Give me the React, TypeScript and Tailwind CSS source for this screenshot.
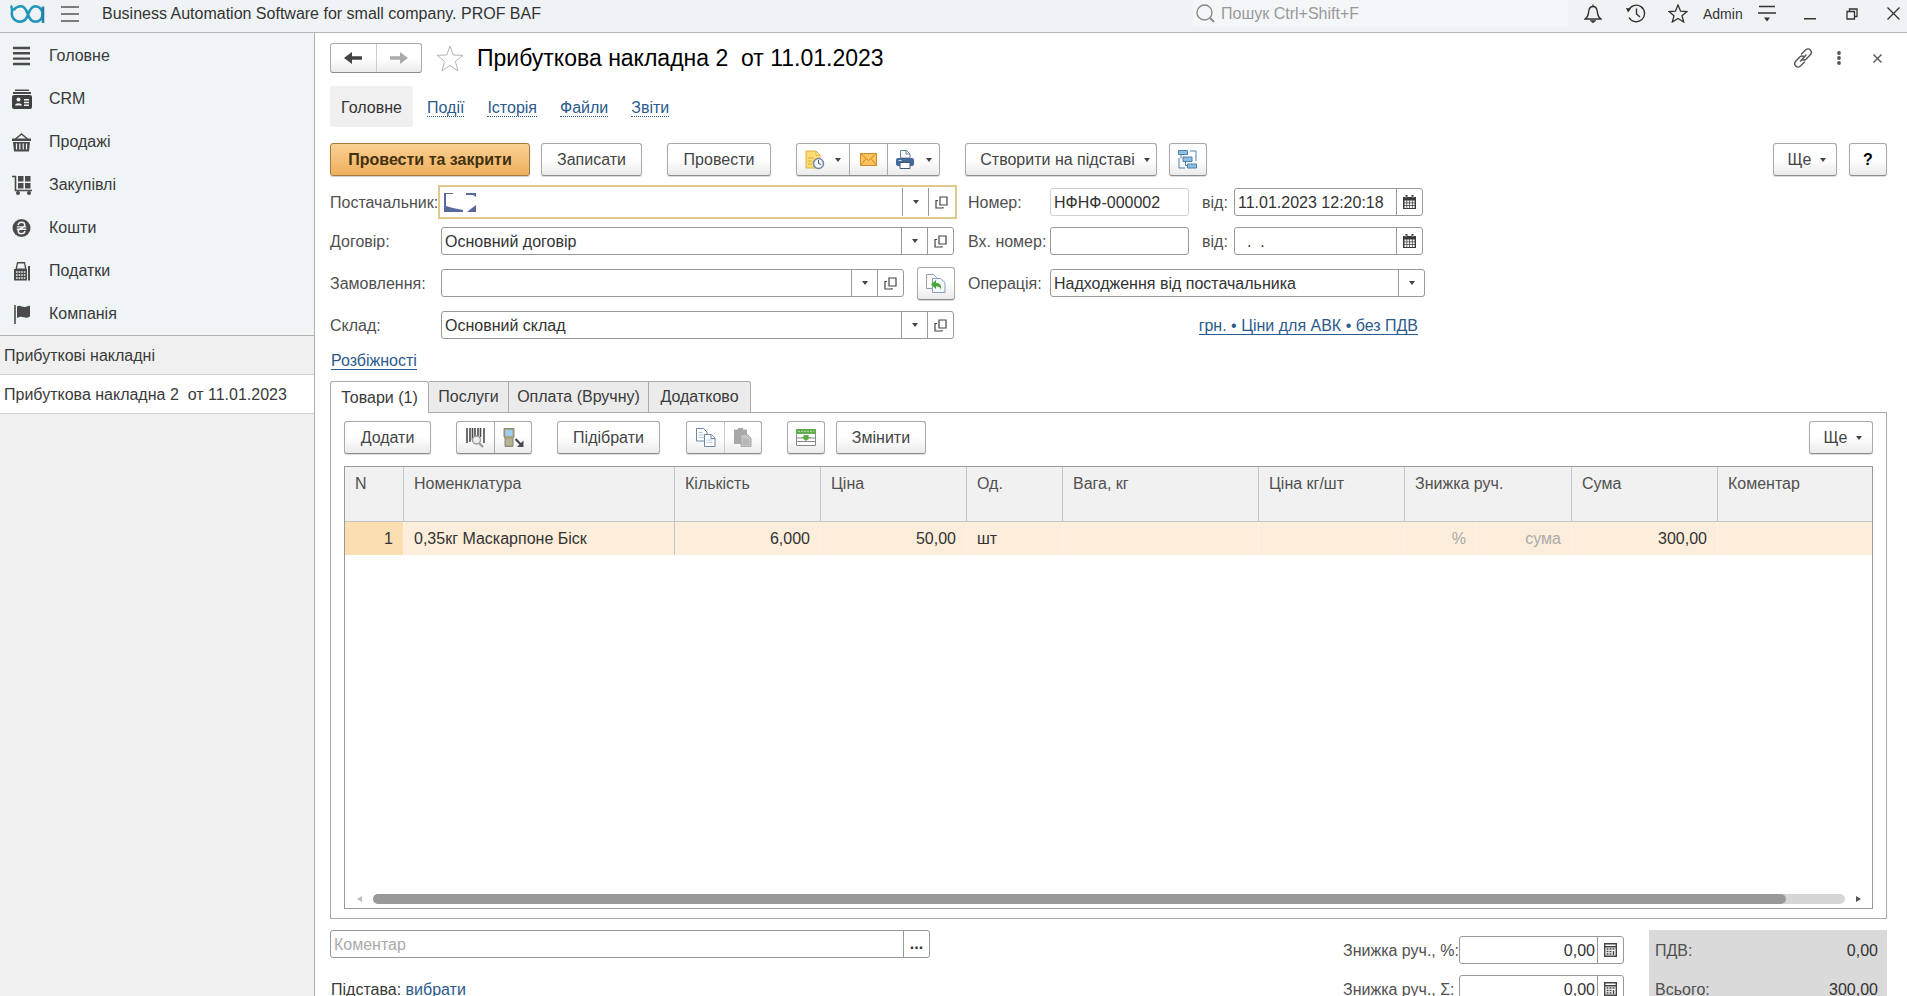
import type { ReactNode } from 'react';

const BTN =
  'flex items-center justify-center h-[33px] rounded-[3px] border border-[#a9a9a9] border-b-[#8c8c8c] bg-linear-to-b from-white from-50% to-[#ebebeb] text-[#444] shadow-[0_1px_1px_rgba(0,0,0,0.15)] shrink-0';
const FIELD = 'flex h-7 rounded-[3px] border border-[#999] bg-white overflow-hidden shrink-0';
const INPUT = 'flex-1 min-w-0 h-full pl-[3px] pt-px bg-transparent outline-none text-[#333]';
const SIDE = 'flex items-center justify-center h-full border-l border-[#999] shrink-0';
const LINK = 'text-[#2b5a8c] border-b border-[#2b5a8c] leading-[17px]';

/* ---------- small glyphs ---------- */

function Caret() {
  return (
    <svg width="6" height="4" viewBox="0 0 6 4" fill="#444">
      <path d="M0 0h6L3 4z" />
    </svg>
  );
}

function OpenIcon() {
  return (
    <svg width="13" height="13" viewBox="0 0 13 13" fill="none" stroke="#444" strokeWidth="1.2">
      <path d="M5 1h7v8H5zM3 4.5H1v7.500h7V11" />
    </svg>
  );
}

function CalendarIcon() {
  return (
    <svg width="13" height="14" viewBox="0 0 13 14">
      <path d="M0 2h13v12H0z" fill="#3a3a3a" />
      <path d="M2.500 0h2v3h-2zM8.500 0h2v3h-2z" fill="#3a3a3a" />
      <path d="M3 1v2M10 1v2" stroke="#fff" strokeWidth=".6" />
      <path
        d="M1.500 5.500h2v2h-2zM4.200 5.500h2v2h-2zM6.900 5.500h2v2h-2zM9.600 5.500h2v2h-2zM1.500 8.200h2v2h-2zM4.200 8.200h2v2h-2zM6.900 8.200h2v2h-2zM9.600 8.200h2v2h-2zM1.500 10.900h2v2h-2zM4.200 10.900h2v2h-2zM6.900 10.900h2v2h-2zM9.600 10.900h2v2h-2z"
        fill="#fff"
      />
    </svg>
  );
}

function CalculatorIcon() {
  return (
    <svg width="13" height="14" viewBox="0 0 13 14" fill="none" stroke="#444">
      <path d="M.7.700h11.600v12.600H.700zM.700 3.800h11.600" strokeWidth="1.400" />
      <path d="M2.500 6h2M5.500 6h2M8.500 6h2M2.500 8.500h2M5.500 8.500h2M2.500 11h2M5.500 11h2M9.500 8v4" strokeWidth="1.500" />
    </svg>
  );
}

function Logo() {
  return (
    <svg width="35" height="20" viewBox="0 0 35 20" fill="none" strokeWidth="2.600">
      <path
        d="M.500 2C2.300 2.300 2 4.500 2 8a8 8 0 0 0 8 9.700c5.500 0 7-4.200 8.500-8.200S22 2.300 25.500 2.300a7.200 7.500 0 0 1 7 7.700c0 4.500-3 7.700-7 7.700-4.300 0-6.300-3.200-7.800-7.700s-3-7.700-6.700-7.700c-3.500 0-5.700 1.500-7.500 4"
        stroke="#2096bb"
      />
      <path d="M33 2.500v16.500" stroke="#2b7fa6" />
    </svg>
  );
}

/* ---------- navigation ---------- */

const sections: { label: string; icon: ReactNode }[] = [
  {
    label: 'Головне',
    icon: <path d="M1 2h17M1 7.300h17M1 12.600h17M1 18h17" stroke="#4a4a4a" strokeWidth="2.400" />,
  },
  {
    label: 'CRM',
    icon: (
      <>
        <path d="M3 .500h14v1.500H3zM1 3h18v2H1z" fill="#4a4a4a" />
        <rect x="0" y="6" width="20" height="14" rx="2" fill="#3f3f3f" />
        <circle cx="6.500" cy="10.500" r="2" fill="#eef3f6" />
        <path d="M3 16.500c0-3 7-3 7 0zM12 10h5v1.500h-5zM12 12.800h5v1.500h-5zM12 15.500h5V17h-5z" fill="#eef3f6" />
      </>
    ),
  },
  {
    label: 'Продажі',
    icon: (
      <>
        <path d="M3.500 7L9.500 2l6 5" fill="none" stroke="#4a4a4a" strokeWidth="1.500" />
        <path d="M0 6.500h19v2.500H0zM1 10h17l-1 9.500H2z" fill="#4a4a4a" />
        <path d="M4.500 11.500v6M7.800 11.500v6M11.200 11.500v6M14.500 11.500v6" stroke="#eef3f6" strokeWidth="1.200" />
      </>
    ),
  },
  {
    label: 'Закупівлі',
    icon: (
      <>
        <path d="M0 1.500h3.500v14H20" fill="none" stroke="#4a4a4a" strokeWidth="1.600" />
        <path d="M6 1h5.500v5.500H6zM13 1h5.500v5.500H13zM6 8h5.500v5.500H6zM13 8h5.500v5.500H13z" fill="#4a4a4a" />
        <circle cx="6" cy="18" r="2" fill="#4a4a4a" />
        <circle cx="17" cy="18" r="2" fill="#4a4a4a" />
      </>
    ),
  },
  {
    label: 'Кошти',
    icon: (
      <>
        <circle cx="9.500" cy="10" r="9" fill="#4a4a4a" />
        <path
          d="M6 7.200C6.500 5 8 4.300 9.500 4.300c2 0 3.300 1.200 3.300 2.700 0 3.500-6.600 3-6.600 6.300 0 1.500 1.500 2.500 3.300 2.500 1.700 0 3-.8 3.500-2.800M4.800 8.900h9.500M4.800 11.300h9.500"
          fill="none"
          stroke="#eef3f6"
          strokeWidth="1.400"
        />
      </>
    ),
  },
  {
    label: 'Податки',
    icon: (
      <>
        <path d="M5 1h8l1.500 7h-11zM2 8h13v11.500H2zM16 5h2v14.500h-2z" fill="#4a4a4a" />
        <path d="M6 2.500h6l1 5H5z" fill="#eef3f6" />
        <path d="M4 11h9.500M4 14h9.500M4 17h9.500" stroke="#eef3f6" strokeWidth="1.300" strokeDasharray="1.600 1" />
      </>
    ),
  },
  {
    label: 'Компанія',
    icon: (
      <>
        <path d="M3 1v19" stroke="#4a4a4a" strokeWidth="1.600" />
        <path d="M5 2.500c3-2 5 1 8 .5 2-.3 2.500-1 5-1.500v11c-3 1.500-4 1.500-6 .8-3-1-4-.8-7 .7z" fill="#4a4a4a" />
      </>
    ),
  },
];

function TitleBar() {
  return (
    <header className="flex items-start h-[33px] shrink-0 bg-[#eff3f6] border-b border-[#b4b8ba] text-[#333]">
      <div className="flex items-center h-[27px] pl-[10px]">
        <Logo />
        <button aria-label="Меню" className="ml-4">
          <svg width="18" height="16" viewBox="0 0 18 16" stroke="#555" strokeWidth="1.500">
            <path d="M0 1h18M0 8h18M0 15h18" />
          </svg>
        </button>
        <span className="ml-[23px] whitespace-nowrap">
          Business Automation Software for small company. PROF BAF
        </span>
      </div>
      <div className="flex items-center ml-auto h-[27px]">
        <label className="flex items-center gap-[6px] w-[375px] h-full pl-[3px] bg-[#f4f7fa]">
          <svg width="19" height="19" viewBox="0 0 19 19" fill="none" stroke="#8a8a8a" strokeWidth="1.400">
            <circle cx="8.500" cy="8.500" r="7.500" />
            <path d="M14 14l4 4" strokeWidth="2" />
          </svg>
          <input className="flex-1 bg-transparent outline-none placeholder:text-[#999]" placeholder="Пошук Ctrl+Shift+F" />
        </label>
        <button aria-label="Сповіщення" className="ml-4">
          <svg width="18" height="19" viewBox="0 0 18 19" fill="none" stroke="#333" strokeWidth="1.400">
            <path d="M1 15h16c-3-2-3.300-4-3.800-8C12.800 4 11.300 2.500 9 2.500S5.200 4 4.800 7C4.300 11 4 13 1 15zM9 .500v2" />
            <path d="M6 16.500h6L9 19z" fill="#333" stroke="#333" strokeWidth=".5" />
          </svg>
        </button>
        <button aria-label="Історія" className="ml-6">
          <svg width="20" height="19" viewBox="0 0 20 19" fill="none" stroke="#333" strokeWidth="1.400">
            <path d="M2.500 6.500A8.300 8.300 0 1 1 3 13.500M10.500 4.500V10l3.500 3" />
            <path d="M0 4l5 .500L2 8.500z" fill="#333" stroke="none" />
          </svg>
        </button>
        <button aria-label="Обране" className="ml-[22px]">
          <svg width="20" height="19" viewBox="0 0 20 19" fill="none" stroke="#333" strokeWidth="1.300">
            <path d="M10 1l2.600 6.200 6.400.300-5 4.200 1.700 6.300-5.700-3.500L4.300 18 6 11.700 1 7.500l6.400-.300z" />
          </svg>
        </button>
        <span className="ml-[15px] w-10 text-[14px]">Admin</span>
        <button aria-label="Налаштування" className="ml-[15px]">
          <svg width="18" height="17" viewBox="0 0 18 17" fill="none" stroke="#333" strokeWidth="1.500">
            <path d="M1 1.500h16M0 8h18" />
            <path d="M6 12.500h6L9 16.500z" fill="#333" stroke="none" />
          </svg>
        </button>
        <button aria-label="Згорнути" className="ml-7 pt-[10px]">
          <svg width="12" height="2" viewBox="0 0 12 2">
            <path d="M0 0h12v1.500H0z" fill="#333" />
          </svg>
        </button>
        <button aria-label="Відновити" className="ml-[30px]">
          <svg width="12" height="12" viewBox="0 0 12 12" fill="none" stroke="#333" strokeWidth="1.300">
            <path d="M1 3.500h7.500V11H1zM3.500 3.500V1H11v7.500H8.500" />
          </svg>
        </button>
        <button aria-label="Закрити програму" className="ml-[29px] mr-[7px]">
          <svg width="13" height="13" viewBox="0 0 13 13" stroke="#333" strokeWidth="1.300">
            <path d="M.500.500l12 12M12.500.500l-12 12" />
          </svg>
        </button>
      </div>
    </header>
  );
}

function Sidebar() {
  return (
    <aside className="w-[315px] shrink-0 bg-[#f0f0f0] border-r border-[#b0b0b0] text-[#3a3a3a]">
      <nav className="bg-[#eff4f7] border-b border-[#b0b0b0] pt-px">
        {sections.map((s) => (
          <a key={s.label} href="#" className="flex items-center h-[43px] pl-3">
            <svg width="20" height="20" viewBox="0 0 20 20">
              {s.icon}
            </svg>
            <span className="ml-[17px]">{s.label}</span>
          </a>
        ))}
      </nav>
      <a href="#" className="flex items-center h-[39px] pl-1 pt-[2px] border-b border-[#d0d0d0]">
        Прибуткові накладні
      </a>
      <a href="#" className="flex items-center h-[39px] pl-1 pt-[2px] bg-white border-b border-[#d0d0d0] whitespace-pre">
        Прибуткова накладна 2  от 11.01.2023
      </a>
    </aside>
  );
}

/* ---------- document form ---------- */

function FormHeader() {
  return (
    <div className="flex items-center h-[30px]">
      <div className="flex w-[92px] h-[30px] rounded-[3px] border border-[#a9a9a9] border-b-[#8c8c8c] bg-linear-to-b from-white from-50% to-[#ebebeb]">
        <button aria-label="Назад" className="flex-1 flex items-center justify-center border-r border-[#ccc]">
          <svg width="18" height="12" viewBox="0 0 18 12">
            <path d="M8 0v4.300h10v3.400H8V12L0 6z" fill="#444" />
          </svg>
        </button>
        <button aria-label="Вперед" className="flex-1 flex items-center justify-center">
          <svg width="18" height="12" viewBox="0 0 18 12">
            <path d="M10 0v4.300H0v3.400h10V12l8-6z" fill="#aaa" />
          </svg>
        </button>
      </div>
      <button aria-label="Додати до обраного" className="ml-[14px]">
        <svg width="28" height="27" viewBox="0 0 28 27" fill="none" stroke="#b4b4b4">
          <path d="M14 1l3.300 9 9.700.300-7.600 6 2.600 9.700-8-5.500-8 5.500 2.600-9.700-7.600-6 9.700-.300z" />
        </svg>
      </button>
      <h1 className="ml-[13px] text-[23px] leading-[30px] text-black whitespace-pre">
        Прибуткова накладна 2  от 11.01.2023
      </h1>
      <div className="flex items-center ml-auto mr-[5px]">
        <button aria-label="Посилання">
          <svg width="20" height="20" viewBox="0 0 20 20" fill="none" stroke="#555" strokeWidth="1.400" strokeLinecap="round">
            <path d="M8.500 6l4-4c1.500-1.300 3.500-1.300 4.800 0s1.300 3.300 0 4.700l-4 4.300c-1.300 1.200-3 1.200-4.300.300M11.500 14l-4 4c-1.500 1.300-3.500 1.300-4.800 0s-1.300-3.300 0-4.700l4-4.300c1.300-1.200 3-1.200 4.300-.300M7.500 13l5.500-6" />
          </svg>
        </button>
        <button aria-label="Ще дії" className="ml-6">
          <svg width="4" height="14" viewBox="0 0 4 14" fill="#555">
            <circle cx="2" cy="2" r="1.900" />
            <circle cx="2" cy="7" r="1.900" />
            <circle cx="2" cy="12" r="1.900" />
          </svg>
        </button>
        <button aria-label="Закрити" className="ml-8">
          <svg width="9" height="9" viewBox="0 0 9 9" stroke="#555" strokeWidth="1.400">
            <path d="M.500.500l8 8M8.500.500l-8 8" />
          </svg>
        </button>
      </div>
    </div>
  );
}

function FormNav() {
  return (
    <nav className="flex items-center h-[41px] mt-[13px]">
      <a href="#" className="flex items-center justify-center w-[83px] h-full pt-[2px] bg-[#f0f0f0] text-[#333] rounded-[2px]">
        Головне
      </a>
      <div className="flex ml-[14px] gap-[23px] pt-[2px]">
        {['Події', 'Історія', 'Файли', 'Звіти'].map((t) => (
          <a key={t} href="#" className="text-[#2b5a8c] border-b border-dotted border-[#2b5a8c] leading-[17px]">
            {t}
          </a>
        ))}
      </div>
    </nav>
  );
}

function CommandBar() {
  return (
    <div className="flex mt-4">
      <button className="h-[33px] w-[200px] rounded-[3px] border border-[#a67a3c] bg-linear-to-b from-[#fad093] to-[#eeb05c] font-bold text-[#44300f] shadow-[0_1px_1px_rgba(0,0,0,0.2)]">
        Провести та закрити
      </button>
      <button className={`${BTN} w-[101px] ml-[11px]`}>Записати</button>
      <button className={`${BTN} w-[104px] ml-[25px]`}>Провести</button>
      <div className={`${BTN} w-[144px] ml-[25px]`}>
        <button aria-label="Нагадування" className="flex items-center justify-center gap-[10px] w-[53px] h-full border-r border-[#a9a9a9]">
          <svg width="20" height="20" viewBox="0 0 20 20">
            <path d="M1 1h10l4 4v13H1z" fill="#fbdc74" stroke="#dcb04a" />
            <path d="M11 1v4h4z" fill="#fff3c4" stroke="#dcb04a" />
            <path d="M3 8h6M3 11h4M3 14h4" stroke="#d9ac45" />
            <circle cx="13.500" cy="13.500" r="5" fill="#f4f7fb" stroke="#7286a3" strokeWidth="1.500" />
            <path d="M13.500 10v3.500l2.500 1" fill="none" stroke="#44566e" />
          </svg>
          <Caret />
        </button>
        <button aria-label="Надіслати" className="flex items-center justify-center w-[38px] h-full border-r border-[#a9a9a9]">
          <svg width="17" height="13" viewBox="0 0 17 13" stroke="#d08a2a">
            <path d="M.500.500h16v12H.500z" fill="#fcc45c" />
            <path d="M.500.500l8 7 8-7M.500 12.500l5.500-7M16.500 12.500L11 5.500" fill="none" />
          </svg>
        </button>
        <button aria-label="Друк" className="flex items-center justify-center gap-3 flex-1 h-full">
          <svg width="18" height="19" viewBox="0 0 18 19">
            <path d="M4.500 8V.500h6l3.500 3.500v4z" fill="#fff" stroke="#6d8098" />
            <path d="M10 .500V4h4" fill="none" stroke="#6d8098" />
            <rect x="0" y="8" width="18" height="8" rx="2" fill="#44699a" />
            <path d="M4 12.500h10v6H4z" fill="#fff" stroke="#3c5877" />
            <path d="M2.500 10.500h3" stroke="#cfe0f2" />
          </svg>
          <Caret />
        </button>
      </div>
      <button className={`${BTN} w-[192px] ml-[25px] gap-[9px] pl-2`}>
        Створити на підставі
        <Caret />
      </button>
      <button aria-label="Структура підпорядкованості" className={`${BTN} w-[38px] ml-3`}>
        <svg width="20" height="19" viewBox="0 0 20 19" fill="#8fbfe3" stroke="#4a80ad">
          <path d="M.500.500h9v4h-9zM5 7h9v4.500H5zM9.500 14h9v4h-9z" />
          <path d="M12 1h6v10M1 8v10h6M3 4.500v4M7.500 11.500v4H9" fill="none" />
        </svg>
      </button>
      <button className={`${BTN} w-16 ml-auto gap-[9px] pl-1`}>
        Ще
        <Caret />
      </button>
      <button className={`${BTN} w-[38px] ml-3 font-bold text-black`}>?</button>
    </div>
  );
}

function PickerButtons({ name }: { name: string }) {
  return (
    <>
      <button aria-label={`${name}: вибрати`} className={`${SIDE} w-[26px]`}>
        <Caret />
      </button>
      <button aria-label={`${name}: відкрити`} className={`${SIDE} w-[26px]`}>
        <OpenIcon />
      </button>
    </>
  );
}

function DateField({ id, value }: { id: string; value: string }) {
  return (
    <div className={`${FIELD} w-[189px]`}>
      <input id={id} className={INPUT} defaultValue={value} />
      <button aria-label="Календар" className={`${SIDE} w-[26px]`}>
        <CalendarIcon />
      </button>
    </div>
  );
}

function Requisites() {
  return (
    <div className="text-[#505050]">
      <div className="flex items-center h-[34px] mt-[9px]">
        <div className="flex w-[638px] items-center">
          <label htmlFor="supplier" className="w-[108px] pt-px">Постачальник:</label>
          <div className="flex items-center w-[519px] h-[34px] border-2 border-[#e0c98c] bg-white px-px py-px">
            <svg className="ml-[3px]" width="32" height="19" viewBox="0 0 32 19">
              <path d="M0 0h9v1H2v12l7 2 10 2v2H0zM22 0h10v4l-3-2h-7zM32 12v7h-9l5-4z" fill="#5a68a0" />
            </svg>
            <input id="supplier" className={INPUT} />
            <div className="flex h-7">
              <PickerButtons name="Постачальник" />
            </div>
          </div>
        </div>
        <label htmlFor="number" className="w-[82px] pt-px">Номер:</label>
        <div className="flex h-7 w-[139px] rounded-[3px] border border-[#d0d0d0]">
          <input id="number" className={INPUT} defaultValue="НФНФ-000002" readOnly />
        </div>
        <label htmlFor="date" className="ml-[13px] w-8 pt-px">від:</label>
        <DateField id="date" value="11.01.2023 12:20:18" />
      </div>

      <div className="flex items-center h-7 mt-2">
        <div className="flex w-[638px] items-center">
          <label htmlFor="contract" className="w-[111px] pt-px">Договір:</label>
          <div className={`${FIELD} w-[513px]`}>
            <input id="contract" className={INPUT} defaultValue="Основний договір" />
            <PickerButtons name="Договір" />
          </div>
        </div>
        <label htmlFor="in-number" className="w-[82px] pt-px">Вх. номер:</label>
        <div className={`${FIELD} w-[139px]`}>
          <input id="in-number" className={INPUT} />
        </div>
        <label htmlFor="in-date" className="ml-[13px] w-8 pt-px">від:</label>
        <DateField id="in-date" value="  .  ." />
      </div>

      <div className="flex items-center h-[34px] mt-[11px]">
        <div className="flex w-[638px] items-center">
          <label htmlFor="order" className="w-[111px] pt-px">Замовлення:</label>
          <div className={`${FIELD} w-[463px]`}>
            <input id="order" className={INPUT} />
            <PickerButtons name="Замовлення" />
          </div>
          <button aria-label="Заповнити за замовленням" className={`${BTN} w-[38px] ml-[13px]`}>
            <svg width="20" height="19" viewBox="0 0 20 19">
              <path d="M.500.500h7l3 3v11H.500z" fill="#fff" stroke="#8ba0b5" />
              <path d="M6.500 4.500h8l4.500 4v10H6.500z" fill="#f3f8fc" stroke="#8ba0b5" />
              <path d="M5 10.500l5-4.500v3c4 0 5.500 2 5 6.500-1-2.200-2.300-3.200-5-3.200V15z" fill="#45a835" />
            </svg>
          </button>
        </div>
        <label htmlFor="operation" className="w-[82px] pt-px">Операція:</label>
        <div className={`${FIELD} w-[375px]`}>
          <select id="operation" className={`${INPUT} appearance-none`}>
            <option>Надходження від постачальника</option>
          </select>
          <span className={`${SIDE} w-[26px]`}>
            <Caret />
          </span>
        </div>
      </div>

      <div className="flex items-center h-7 mt-[11px]">
        <div className="flex w-[638px] items-center">
          <label htmlFor="stock" className="w-[111px] pt-px">Склад:</label>
          <div className={`${FIELD} w-[513px]`}>
            <input id="stock" className={INPUT} defaultValue="Основний склад" />
            <PickerButtons name="Склад" />
          </div>
        </div>
        <div className="flex justify-end w-[450px] pt-[2px]">
          <a href="#" className={LINK}>грн. • Ціни для АВК • без ПДВ</a>
        </div>
      </div>

      <div className="flex items-center h-6 mt-[9px] pl-px pt-[2px]">
        <a href="#" className={LINK}>Розбіжності</a>
      </div>
    </div>
  );
}

function GoodsToolbar() {
  return (
    <div className="flex">
      <button className={`${BTN} w-[87px]`}>Додати</button>
      <div className={`${BTN} w-[76px] ml-[25px]`}>
        <button aria-label="Пошук за штрихкодом" className="flex items-center justify-center w-[38px] h-full border-r border-[#a9a9a9]">
          <svg width="19" height="20" viewBox="0 0 19 20">
            <path d="M1 0v15M4 0v14M6.500 0v12M9 0v9M12 0v9M14.500 0v9M18 0v15" stroke="#4a4a4a" strokeWidth="1.600" />
            <circle cx="10.500" cy="12" r="4" fill="#eee" stroke="#999" strokeWidth="1.400" />
            <path d="M13 15l4 4" stroke="#999" strokeWidth="2.200" />
          </svg>
        </button>
        <button aria-label="Термінал збору даних" className="flex items-center justify-center flex-1 h-full">
          <svg width="21" height="20" viewBox="0 0 21 20">
            <path d="M1 .500h10v8l-1 2v8H2v-8l-1-2z" fill="#a9a283" stroke="#8b8a80" />
            <path d="M2.500 2h7v6h-7z" fill="#9fd0f2" />
            <path d="M4 11.500v6M6 11.500v6M8 11.500v6" stroke="#e8e4d2" strokeDasharray="1 1" />
            <path d="M12.500 11l6 6" stroke="#4a4a4a" strokeWidth="2.200" />
            <path d="M20.500 12.500V19H14z" fill="#4a4a4a" />
          </svg>
        </button>
      </div>
      <button className={`${BTN} w-[103px] ml-[25px]`}>Підібрати</button>
      <div className={`${BTN} w-[76px] ml-[26px]`}>
        <button aria-label="Копіювати" className="flex items-center justify-center w-[38px] h-full border-r border-[#ccc]">
          <svg width="20" height="19" viewBox="0 0 20 19" fill="#fff" stroke="#6b86a6">
            <path d="M.500.500h7l3.500 3.500v9H.500z" />
            <path d="M2.500 4.500h4M2.500 7h6M2.500 9.500h6" stroke="#b3c8dc" />
            <path d="M8.500 6.500h7l3.500 3.500v8.500H8.500z" />
            <path d="M10.500 12h6M10.500 14.300h6" stroke="#b3c8dc" />
            <path d="M15 6.500v4h4" />
          </svg>
        </button>
        <button aria-label="Вставити" disabled className="flex items-center justify-center flex-1 h-full">
          <svg width="18" height="19" viewBox="0 0 18 19">
            <path d="M0 1.500h4V0h5v1.500h4V16H0z" fill="#a8a8a8" />
            <path d="M7 6.500h6.500L17 10v8.500H7z" fill="#c4c4c4" stroke="#a8a8a8" />
            <path d="M9 12h6M9 14h6M9 16h6" stroke="#aaa" />
          </svg>
        </button>
      </div>
      <button aria-label="Заповнити" className={`${BTN} w-[38px] ml-[25px]`}>
        <svg width="20" height="17" viewBox="0 0 20 17">
          <path d="M.500.500h19v16H.500z" fill="#fff" stroke="#888" />
          <path d="M0 0h20v5H0z" fill="#62ad4f" />
          <path d="M2 2.500h16" stroke="#a9dc9c" strokeDasharray="2 1" />
          <path d="M1 9h5M14 9h5M1 12.500h18" stroke="#888" />
          <path d="M7.500 6h5v2H15l-5 4-5-4h2.500z" fill="#5cab47" />
        </svg>
      </button>
      <button className={`${BTN} w-[90px] ml-[11px]`}>Змінити</button>
      <button className={`${BTN} w-16 ml-auto gap-[9px] pl-1`}>
        Ще
        <Caret />
      </button>
    </div>
  );
}

function GoodsTable() {
  const th = 'align-top text-left font-normal px-[10px] pt-[5px] border-r border-b border-[#c4c4c4]';
  const td = 'px-[10px] pt-px border-r border-[#fdf3e4]';
  return (
    <div className="flex flex-col flex-1 min-h-0 mt-3 border border-[#999] overflow-hidden">
      <table className="table-fixed w-full border-separate border-spacing-0">
        <colgroup>
          <col className="w-[59px]" />
          <col className="w-[271px]" />
          <col className="w-[146px]" />
          <col className="w-[146px]" />
          <col className="w-24" />
          <col className="w-[196px]" />
          <col className="w-[146px]" />
          <col className="w-[72px]" />
          <col className="w-[95px]" />
          <col className="w-[146px]" />
          <col />
        </colgroup>
        <thead>
          <tr className="h-[55px] bg-[#f1f1f1] text-[#505050]">
            <th className={th}>N</th>
            <th className={th}>Номенклатура</th>
            <th className={th}>Кількість</th>
            <th className={th}>Ціна</th>
            <th className={th}>Од.</th>
            <th className={th}>Вага, кг</th>
            <th className={th}>Ціна кг/шт</th>
            <th className={th} colSpan={2}>Знижка руч.</th>
            <th className={th}>Сума</th>
            <th className="align-top text-left font-normal px-[10px] pt-[5px] border-b border-[#c4c4c4]">Коментар</th>
          </tr>
        </thead>
        <tbody>
          <tr className="h-[33px] bg-[#fdeedb] text-[#333]">
            <td className="px-[10px] pt-px text-right bg-[#fbdfb0] border-r border-[#fdf3e4]">1</td>
            <td className="px-[10px] pt-px border-r border-[#c4c4c4]">0,35кг Маскарпоне Біск</td>
            <td className={`${td} text-right`}>6,000</td>
            <td className={`${td} text-right`}>50,00</td>
            <td className={td}>шт</td>
            <td className={td} />
            <td className={td} />
            <td className={`${td} text-right text-[#aaa]`}>%</td>
            <td className={`${td} text-right text-[#aaa]`}>сума</td>
            <td className={`${td} text-right`}>300,00</td>
            <td />
          </tr>
        </tbody>
      </table>
      <div className="flex items-center mt-auto mb-1 h-[10px] pl-3 pr-[11px]">
        <svg width="5" height="6" viewBox="0 0 5 6">
          <path d="M5 0v6L0 3z" fill="#bbb" />
        </svg>
        <div className="flex-1 mx-[11px] h-[10px] rounded-full bg-[#d6d6d6]">
          <div className="w-[96%] h-full rounded-full bg-[#999]" />
        </div>
        <svg width="5" height="6" viewBox="0 0 5 6">
          <path d="M0 0v6l5-3z" fill="#555" />
        </svg>
      </div>
    </div>
  );
}

function GoodsPanel() {
  const tab = 'h-[31px] border-t border-r border-[#aaa] bg-[#ebebeb]';
  return (
    <section className="flex flex-col flex-1 min-h-0 mt-[9px] text-[#3a3a3a]">
      <div role="tablist" className="flex">
        <button role="tab" aria-selected="true" className="relative z-10 -mb-px h-8 w-[99px] rounded-t-[3px] border border-b-0 border-[#aaa] bg-white">
          Товари (1)
        </button>
        <button role="tab" className={`${tab} w-20`}>Послуги</button>
        <button role="tab" className={`${tab} w-[140px]`}>Оплата (Вручну)</button>
        <button role="tab" className={`${tab} w-[102px] rounded-tr-[3px]`}>Додатково</button>
      </div>
      <div className="flex flex-col flex-1 min-h-0 border border-[#aaa] px-[13px] pt-2 pb-[9px]">
        <GoodsToolbar />
        <GoodsTable />
      </div>
    </section>
  );
}

function AmountField({ id }: { id: string }) {
  return (
    <div className={`${FIELD} w-[165px]`}>
      <input id={id} className={`${INPUT} pr-[2px] text-right`} defaultValue="0,00" />
      <button aria-label="Калькулятор" className={`${SIDE} w-[26px]`}>
        <CalculatorIcon />
      </button>
    </div>
  );
}

function Footer() {
  return (
    <footer className="flex shrink-0 h-[77px] pt-[11px] overflow-hidden text-[#505050]">
      <div>
        <div className={`${FIELD} w-[600px]`}>
          <input aria-label="Коментар" className={`${INPUT} placeholder:text-[#aaa]`} placeholder="Коментар" />
          <button className={`${SIDE} w-[26px] font-bold text-[#333]`}>...</button>
        </div>
        <div className="mt-5 pl-px text-[#3a3a3a]">
          Підстава: <a href="#" className={LINK}>вибрати</a>
        </div>
      </div>
      <div className="ml-auto flex flex-col gap-[11px] pt-[6px]">
        <div className="flex items-center">
          <label htmlFor="disc-percent" className="w-[116px] pt-px">Знижка руч., %:</label>
          <AmountField id="disc-percent" />
        </div>
        <div className="flex items-center">
          <label htmlFor="disc-sum" className="w-[116px] pt-px">Знижка руч., Σ:</label>
          <AmountField id="disc-sum" />
        </div>
      </div>
      <dl className="flex flex-col gap-[11px] w-[238px] h-[120px] ml-[25px] pt-[7px] pl-[6px] pr-[9px] bg-[#dadada] leading-7">
        <div className="flex justify-between">
          <dt>ПДВ:</dt>
          <dd className="text-[#333]">0,00</dd>
        </div>
        <div className="flex justify-between">
          <dt>Всього:</dt>
          <dd className="text-[#333]">300,00</dd>
        </div>
      </dl>
    </footer>
  );
}

export default function App() {
  return (
    <div className="flex flex-col h-screen overflow-hidden bg-white font-['Liberation_Sans',Arial,sans-serif] text-[16px] leading-6">
      <TitleBar />
      <div className="flex flex-1 min-h-0">
        <Sidebar />
        <main className="flex flex-col flex-1 min-w-0 pt-[10px] pl-[15px] pr-5">
          <FormHeader />
          <FormNav />
          <CommandBar />
          <Requisites />
          <GoodsPanel />
          <Footer />
        </main>
      </div>
    </div>
  );
}
